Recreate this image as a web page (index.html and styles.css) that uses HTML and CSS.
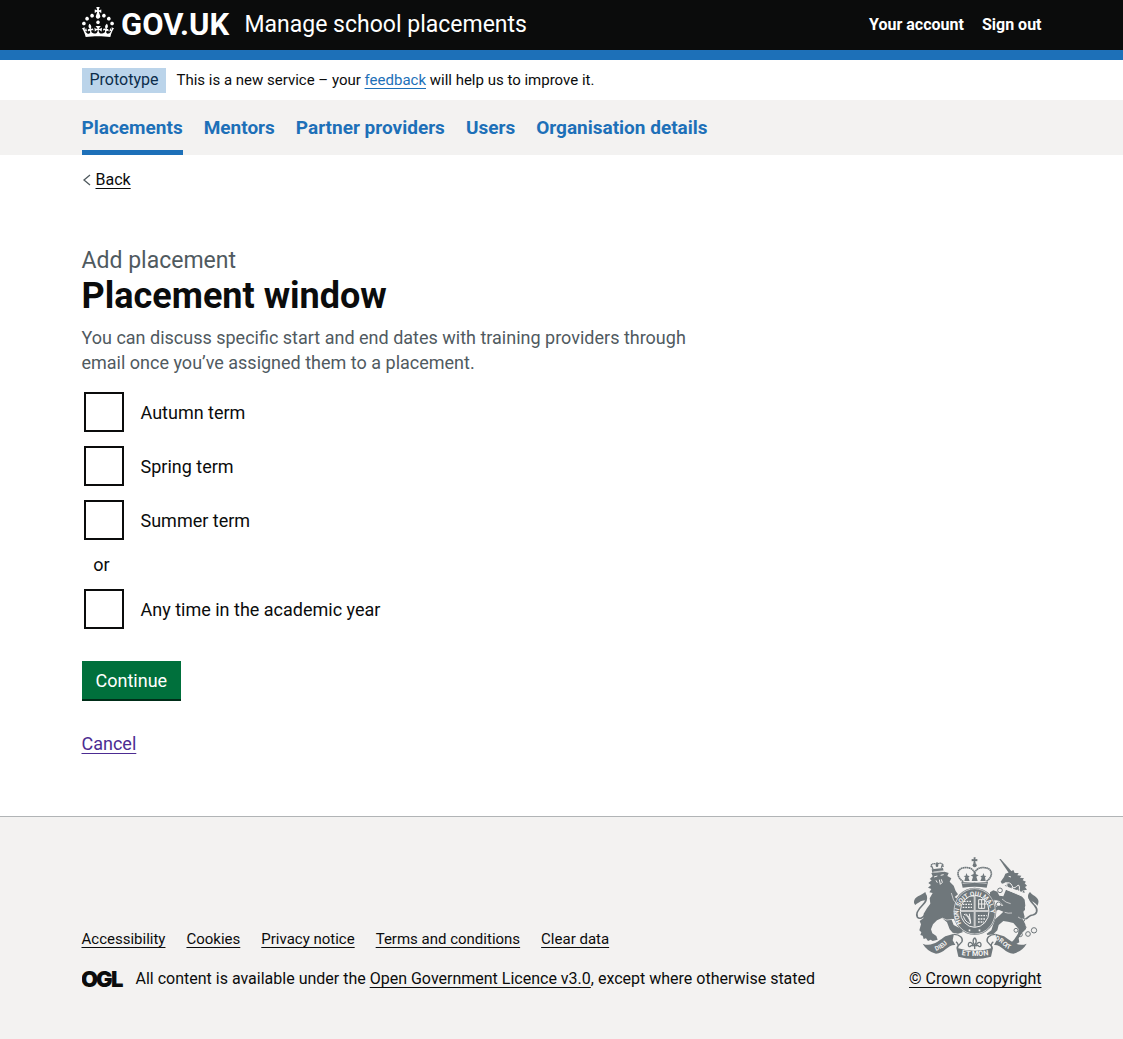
FILE: index.html
```html
<!DOCTYPE html>
<html lang="en">
<head>
<meta charset="utf-8">
<meta name="viewport" content="width=device-width, initial-scale=1">
<title>Placement window - Manage school placements - GOV.UK</title>
<link rel="stylesheet" href="styles.css">
</head>
<body>
<header class="header">
  <div class="container header-row">
    <a class="logo" href="#" aria-label="GOV.UK">
      <svg width="150" height="38" viewBox="0 -2 150 38" aria-hidden="true">
        <path fill="currentColor" d="M22.6 10.4c-1 .4-2-.1-2.4-1-.4-.9.1-2 1-2.4.9-.4 2 .1 2.4 1s-.1 2-1 2.4m-5.9 6.7c-.9.4-2-.1-2.4-1-.4-.9.1-2 1-2.4.9-.4 2 .1 2.4 1s-.1 2-1 2.4m10.8-3.7c-1 .4-2-.1-2.4-1-.4-.9.1-2 1-2.4.9-.4 2 .1 2.4 1s0 2-1 2.4m3.3 4.8c-1 .4-2-.1-2.4-1-.4-.9.1-2 1-2.4.9-.4 2 .1 2.4 1s-.1 2-1 2.4M17 4.7l2.3 1.2V2.5l-2.3.7-.2-.2.9-3h-3.4l.9 3-.2.2c-.1.1-2.3-.7-2.3-.7v3.4L15 4.7c.1.1.1.2.2.2l-1.3 4c-.1.2-.1.4-.1.6 0 1.1.8 2 1.9 2.2h.7c1-.2 1.9-1.1 1.9-2.1 0-.2 0-.4-.1-.6l-1.3-4c-.1-.2 0-.2.1-.3m-7.6 5.7c.9.4 2-.1 2.4-1 .4-.9-.1-2-1-2.4-.9-.4-2 .1-2.4 1s0 2 1 2.4m-5 3c.9.4 2-.1 2.4-1 .4-.9-.1-2-1-2.4-.9-.4-2 .1-2.4 1s.1 2 1 2.4m-3.2 4.8c.9.4 2-.1 2.4-1 .4-.9-.1-2-1-2.4-.9-.4-2 .1-2.4 1s0 2 1 2.4m14.8 11c4.4 0 8.6.3 12.3.8 1.1-4.5 2.4-7 3.7-8.8l-2.5-.9c.2 1.3.3 1.9 0 2.7-.4-.4-.8-1.1-1.1-2.3l-1.2 4c.7-.5 1.3-.8 2-.9-1.1 2.5-2.6 3.1-3.5 3-1.1-.2-1.7-1.2-1.5-2.1.3-1.2 1.5-1.5 2.1-.1 1.1-2.3-.8-3-2-2.3 1.9-1.9 2.1-3.5.6-5.6-2.1 1.6-2.1 3.2-1.2 5.5-1.2-1.4-3.2-.6-2.5 1.6.9-1.4 2.1-.5 1.9.8-.2 1.1-1.7 2.1-3.5 1.9-2.7-.2-2.9-2.1-2.9-3.6.7-.1 1.9.5 2.9 1.9l.4-4.3c-1.1 1.1-2.1 1.4-3.2 1.4.4-1.2 2.1-3 2.1-3h-5.4s1.7 1.9 2.1 3c-1.1 0-2.1-.2-3.2-1.4l.4 4.3c1-1.4 2.2-2 2.9-1.9-.1 1.5-.2 3.4-2.9 3.6-1.9.2-3.4-.8-3.5-1.9-.2-1.3 1-2.2 1.9-.8.7-2.3-1.2-3-2.5-1.6.9-2.2.9-3.9-1.2-5.5-1.5 2-1.3 3.7.6 5.6-1.2-.7-3.1 0-2 2.3.6-1.4 1.8-1.1 2.1.1.2.9-.3 1.9-1.5 2.1-.9.2-2.4-.5-3.5-3 .6 0 1.2.3 2 .9l-1.2-4c-.3 1.1-.7 1.9-1.1 2.3-.3-.8-.2-1.4 0-2.7l-2.9.9C1.3 23 2.6 25.5 3.7 30c3.7-.5 7.9-.8 12.3-.8"/>
        <text class="logo-word" x="39" y="28">GOV.UK</text>
      </svg>
    </a>
    <a class="service" href="#">Manage school placements</a>
    <nav class="account" aria-label="Account">
      <a href="#">Your account</a>
      <a href="#">Sign out</a>
    </nav>
  </div>
</header>
<div class="container phase">
  <strong class="tag">Prototype</strong>
  <span>This is a new service – your <a class="link" href="#">feedback</a> will help us to improve it.</span>
</div>
<nav class="primary" aria-label="Primary">
  <ul class="container primary-list">
    <li><a class="current" aria-current="page" href="#">Placements</a></li>
    <li><a href="#">Mentors</a></li>
    <li><a href="#">Partner providers</a></li>
    <li><a href="#">Users</a></li>
    <li><a href="#">Organisation details</a></li>
  </ul>
</nav>
<div class="container">
  <a class="back" href="#"><svg width="9" height="12" viewBox="0 0 9 12" aria-hidden="true"><path d="M8 1 2 6l6 5" fill="none" stroke="#505a5f" stroke-width="1.3"/></svg><span>Back</span></a>
  <main class="main">
    <form class="form">
      <fieldset>
        <legend>
          <span class="caption">Add placement</span>
          <h1>Placement window</h1>
        </legend>
        <p class="hint">You can discuss specific start and end dates with training providers through email once you’ve assigned them to a placement.</p>
        <div class="options">
          <div class="option"><input type="checkbox" id="autumn"><label for="autumn">Autumn term</label></div>
          <div class="option"><input type="checkbox" id="spring"><label for="spring">Spring term</label></div>
          <div class="option"><input type="checkbox" id="summer"><label for="summer">Summer term</label></div>
          <div class="divider">or</div>
          <div class="option"><input type="checkbox" id="any"><label for="any">Any time in the academic year</label></div>
        </div>
      </fieldset>
      <button type="button" class="button">Continue</button>
      <p class="cancel"><a href="#">Cancel</a></p>
    </form>
  </main>
</div>
<footer class="footer">
  <div class="container footer-row">
    <div class="meta">
      <ul class="footer-links">
        <li><a href="#">Accessibility</a></li>
        <li><a href="#">Cookies</a></li>
        <li><a href="#">Privacy notice</a></li>
        <li><a href="#">Terms and conditions</a></li>
        <li><a href="#">Clear data</a></li>
      </ul>
      <div class="licence">
        <svg width="44" height="28" viewBox="0 0 44 28" aria-hidden="true" class="ogl">
          <text x="-1" y="22">O</text><text x="14" y="22">G</text><text x="29" y="22">L</text>
        </svg>
        <span>All content is available under the <a href="#">Open Government Licence v3.0</a>, except where otherwise stated</span>
      </div>
    </div>
    <a class="copyright" href="#">
      <svg class="crest" width="126" height="102" viewBox="25 20 378 306" aria-hidden="true">
        <g class="ink">
          <!-- lion -->
          <path d="M80 68L120 64 132 68 128 77 140 84 135 94 147 106 153 122 160 132 150 140 162 150 150 160 154 176 166 188 172 206 166 214 150 206 140 206 147 224 160 231 172 236 174 246 160 250 144 247 135 237 127 216 112 203 97 210 85 222 79 237 83 249 95 257 99 268 84 272 78 268 70 272 64 264 57 266 54 256 47 254 50 246 44 240 49 222 45 212 56 204 57 190 67 174 77 160 75 144 84 128 74 126 80 116 70 112 79 104 71 98 81 90 75 86 84 78z"/>
          <path d="M32 164c-8-6-4-20 8-26 10-4 14-8 22-13 2 8 6 10 4 18-2 10-12 6-18 10-6 4-10 6-16 11z"/>
          <!-- lion's crown -->
          <path d="M81 57l34-4 2 9-34 5z"/>
          <circle cx="97" cy="39" r="3"/><circle cx="97" cy="46" r="4"/>
          <path d="M80 46l5 10M114 42l-4 10" stroke="#6f777b" stroke-width="4"/>
          <!-- unicorn -->
          <path d="M284 26l4 0 34 38-8 6z"/>
          <path d="M314 66L326 59 330 68 342 68 338 75 350 76 346 82 358 84 354 90 364 94 360 99 367 106 361 110 367 118 358 120 360 128 300 106 312 100 302 97 292 100 288 94 298 80 302 70z"/>
          <path d="M304 118L350 136 360 148 362 166 356 184 360 200 355 208 362 222 364 236 352 248 342 264 344 276 330 284 316 280 328 268 340 250 342 236 326 218 310 214 296 212 282 224 278 240 266 252 248 254 246 250 260 240 266 222 272 206 286 194 296 184 282 178 272 182 270 194 262 188 266 172 282 166 296 166 284 152 268 148 256 136 256 126 266 120 278 124 284 136 296 138z"/>
          <path d="M398 166c4-8 6-16-2-24-8-8-14-8-20-17-6 6-8 14-4 20 4 8 16 6 26 21z"/>
          <!-- central crown -->
          <path d="M207 21h6l-1 6 6-1v7l-6-1 1 8h-7l1-8-6 1v-7l6 1z"/>
          <circle cx="210" cy="45" r="6"/>
          <path d="M170 95h80l-4 17q-36-6-72 0z"/>
          <path d="M179 92l3-11-5-4 6-1 2-8 4 8 6 1-4 5 4 10zM201 92l4-13-7-4 8-3 4-11 4 11 8 3-7 4 4 13zM227 92l4-10-4-5 6-1 4-8 2 8 6 1-4 4 2 11z"/>
          <!-- garter, scrolls -->
          <ellipse cx="210" cy="183" rx="65" ry="71"/>
          <path d="M54 280c28 12 50-10 68-22l26-8-4 20 8 14c-22-2-34 26-58 26q-26-6-40-30z"/>
          <path d="M366 280c-28 12-50-10-68-22l-26-8 4 20-8 14c22-2 34 26 58 26q26-6 40-30z"/>
          <path d="M155 292q55 18 110 0l-6 27q-49 14-98 0z"/>
        </g>
        <g class="outline">
          <path d="M64 136c4 12-2 20-10 28-14 14-22 26-16 36 6 8 18 2 24-8" stroke-width="5"/>
          <path d="M376 134c-6 14 6 22 14 32 12 14 6 26-6 28-10 0-12 8-22 12" stroke-width="5"/>
          <path d="M80 50c-4-10 12-14 17-6 4-8 20-8 18 6" stroke-width="4" stroke-dasharray="4 1"/>
          <path d="M176 94c-22-14-22-40 4-42 14-2 26 4 30 16 4-12 16-18 30-16 26 2 26 28 4 42" stroke-width="5" stroke-dasharray="5 1"/>
          <circle cx="334" cy="240" r="6"/><circle cx="347" cy="253" r="6"/><circle cx="370" cy="251" r="7"/><circle cx="388" cy="240" r="8"/><circle cx="360" cy="231" r="4"/>
          <path d="M148 252c18 0 28 12 24 22l-16 18M154 274c8 6 8 12 4 20M272 252c-18 0-28 12-24 22l16 18M266 274c-8 6-8 12-4 20" stroke-width="4"/>
          <path d="M210 284v12M199 286h22M210 262c-8 8-6 14 0 22 6-8 8-14 0-22M206 288c-4-16-15-14-15-5s9 6 8 1M214 288c4-16 15-14 15-5s-9 6-8 1" stroke-width="4"/>
        </g>
        <g class="paper">
          <ellipse cx="210" cy="183" rx="62" ry="68" stroke-width="2"/>
          <ellipse cx="210" cy="183" rx="43" ry="48" stroke-width="3"/>
          <path d="M210 137v92M168 182h84" stroke-width="6" opacity=".7"/>
          <path d="M178 153h24M174 162h28M174 171h28M220 196h26M220 206h24M220 215h18" stroke-width="4" stroke-dasharray="5 3"/>
          <path d="M222 148h18v26h-18zM231 146v30M220 161h26M178 192c14 4 16 18 20 24M184 190c8 8 12 16 14 24M176 198c4 12 10 18 20 22M194 190l4 30" stroke-width="3"/>
          <path d="M88 80l10-3M108 75l9-2M94 90l4 7M104 88l3 14 6-6-3-9" stroke-width="3"/>
          <path d="M312 78l7 2M300 98q18-4 22 8t14 2 8 10 12 2M298 114l56 24M306 104l4 12M322 110l4 12M338 118l4 12" stroke-width="3"/>
          <path d="M86 65l32-4M174 99q36-6 72 0" stroke-width="2"/>
          <path d="M140 128q4 24 18 36M112 203q14 10 30 4M148 184l14 14M292 146q12 12 26 14M300 186q10 4 22 2M340 200q8 6 16 6" stroke-width="2"/>
          <path d="M192 240h5M222 240h5" stroke-width="5"/>
        </g>
        <g class="outline">
          <circle cx="286" cy="120" r="7"/><circle cx="270" cy="142" r="7"/><circle cx="282" cy="162" r="7"/><circle cx="354" cy="176" r="6"/><circle cx="354" cy="208" r="6"/>
        </g>
        <defs>
          <path id="garter" d="M170 219A48 53 0 1 1 250 219"/>
          <path id="scroll-left" d="M94 302Q114 294 124 284T160 264"/>
          <path id="scroll-right" d="M270 268Q288 274 296 286T340 302"/>
          <path id="scroll-mid" d="M171 314Q210 321 260 313"/>
        </defs>
        <g class="motto">
          <text font-size="19"><textPath href="#garter">HONI SOIT QUI MAL Y</textPath></text>
          <text font-size="19"><textPath href="#scroll-left">DIEU</textPath></text>
          <text font-size="19"><textPath href="#scroll-right">DROIT</textPath></text>
          <text font-size="22"><textPath href="#scroll-mid">ET MON</textPath></text>
        </g>
      </svg>
      <span>© Crown copyright</span>
    </a>
  </div>
</footer>
</body>
</html>
```
FILE: styles.css
```css
* { box-sizing: border-box; }

body {
  margin: 0;
  min-height: 100vh;
  display: flex;
  flex-direction: column;
  background: #fff;
  color: #0b0c0c;
  font-family: Roboto, Arial, sans-serif;
  font-size: 15px;
  line-height: 20px;
}

ul { list-style: none; margin: 0; padding: 0; }

a {
  color: inherit;
  text-underline-offset: 3px;
  text-decoration-thickness: 1px;
}

.container {
  width: calc(100% - 60px);
  max-width: 960px;
  margin-left: auto;
  margin-right: auto;
}

.header {
  background: #0b0c0c;
  color: #fff;
  border-bottom: 10px solid #1d70b8;
}

.header a { text-decoration: none; }

.header-row {
  display: flex;
  align-items: center;
  gap: 13px;
  min-height: 50px;
}

.logo { display: flex; padding-bottom: 2px; }

.logo-word {
  font-family: Roboto, Arial, sans-serif;
  font-size: 31px;
  font-weight: 700;
  fill: currentColor;
}

.service { font-size: 23px; line-height: 30px; }

.account {
  display: flex;
  gap: 18px;
  margin-left: auto;
  font-size: 16px;
  font-weight: 700;
}

.phase {
  display: flex;
  align-items: center;
  gap: 10px;
  min-height: 40px;
}

.tag {
  padding: 2px 8px 3px;
  background: #bbd4ea;
  color: #0c2d4a;
  font-size: 16px;
  font-weight: 400;
}

.link { color: #1d70b8; }

.primary { background: #f3f2f1; }

.primary-list { display: flex; flex-wrap: wrap; gap: 0 21px; }

.primary a {
  display: block;
  padding: 15px 0 10px;
  border-bottom: 5px solid transparent;
  color: #1d70b8;
  font-size: 19px;
  font-weight: 700;
  line-height: 25px;
  text-decoration: none;
}

.primary .current { border-bottom-color: #1d70b8; }

.back {
  display: inline-flex;
  align-items: center;
  gap: 5px;
  margin-top: 15px;
  text-decoration: none;
  font-size: 16px;
}

.back span {
  text-decoration: underline;
  text-decoration-thickness: 1px;
  text-underline-offset: 3px;
}

.main { padding: 55px 0 60px; }

.form {
  max-width: 640px;
  font-size: 18px;
  line-height: 25px;
}

fieldset { margin: 0; padding: 0; border: 0; min-width: 0; }

legend { padding: 0; }

.caption {
  display: block;
  color: #505a5f;
  font-size: 23px;
  line-height: 30px;
}

h1 {
  margin: 0 0 9px;
  font-size: 36px;
  font-weight: 700;
  line-height: 40px;
}

.hint { margin: 0 0 15px; color: #505a5f; }

.options { display: grid; gap: 10px; }

.option {
  display: flex;
  align-items: center;
  gap: 17px;
  padding: 2px;
}

.option input {
  appearance: none;
  flex: none;
  width: 40px;
  height: 40px;
  margin: 0;
  border: 2px solid #0b0c0c;
  background: #fff;
}

.divider {
  width: 40px;
  text-align: center;
}

.button {
  display: block;
  margin-top: 30px;
  padding: 7px 14px 6px;
  border: 0;
  background: #00703c;
  box-shadow: 0 2px 0 #002d18;
  color: #fff;
  font: inherit;
}

.cancel { margin: 32px 0 0; }

.cancel a { color: #4c2c92; }

.footer {
  flex: 1;
  padding: 40px 0 50px;
  border-top: 1px solid #b1b4b6;
  background: #f3f2f1;
}

.footer-row {
  display: flex;
  flex-wrap: wrap;
  align-items: flex-end;
  justify-content: space-between;
  gap: 20px;
}

.meta { display: grid; gap: 20px; }

.footer-links { display: flex; flex-wrap: wrap; gap: 4px 21px; }

.licence {
  display: flex;
  align-items: center;
  gap: 10px;
  font-size: 16px;
}

.ogl { flex: none; margin: -4px 0; }

.ogl text {
  font-family: Inter, Arial, sans-serif;
  font-size: 22px;
  font-weight: 900;
  fill: #0b0c0c;
}

.copyright {
  display: grid;
  justify-items: end;
  gap: 10px;
  font-size: 16px;
}

.crest { margin-right: 3px; }

.ink { fill: #6f777b; }

.outline { fill: none; stroke: #6f777b; stroke-width: 3; }

.paper { fill: none; stroke: #f3f2f1; }

.motto {
  fill: #f3f2f1;
  font-family: Roboto, Arial, sans-serif;
  font-weight: 700;
}
```
